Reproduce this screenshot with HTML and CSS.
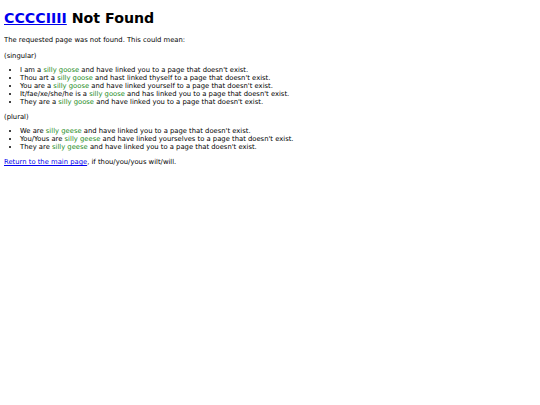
FILE: index.html
```html
<!DOCTYPE html>
<html>
<head>
<meta charset="utf-8">
<title>Not Found</title>
<link rel="stylesheet" href="styles.css">
</head>
<body>
<h1 class="title"><a href="#">CCCCIIII</a> Not Found</h1>
<p class="intro">The requested page was not found. This could mean:</p>
<p>(singular)</p>
<ul class="list">
<li>I am a <span class="goose">silly goose</span> and have linked you to a page that doesn't exist.</li>
<li>Thou art a <span class="goose">silly goose</span> and hast linked thyself to a page that doesn't exist.</li>
<li>You are a <span class="goose">silly goose</span> and have linked yourself to a page that doesn't exist.</li>
<li>It/fae/xe/she/he is a <span class="goose">silly goose</span> and has linked you to a page that doesn't exist.</li>
<li>They are a <span class="goose">silly goose</span> and have linked you to a page that doesn't exist.</li>
</ul>
<p>(plural)</p>
<ul class="list">
<li>We are <span class="goose">silly geese</span> and have linked you to a page that doesn't exist.</li>
<li>You/Yous are <span class="goose">silly geese</span> and have linked yourselves to a page that doesn't exist.</li>
<li>They are <span class="goose">silly geese</span> and have linked you to a page that doesn't exist.</li>
</ul>
<p><a href="#">Return to the main page</a>, if thou/you/yous wilt/will.</p>
</body>
</html>
```
FILE: styles.css
```css
body {
  margin: 4px;
  font-family: "DejaVu Sans", Verdana, sans-serif;
  font-size: 6.8px;
  line-height: 8px;
  color: #000;
  background: #fff;
}
.title {
  font-size: 14.2px;
  line-height: 16px;
  margin: 6px 0 10px;
}
a {
  color: #0000ee;
}
p {
  margin: 6px 0;
}
.intro {
  margin-bottom: 8px;
}
.list {
  margin: 5.5px 0 7px;
  padding-left: 16px;
}
.goose {
  color: #228b22;
}
```
